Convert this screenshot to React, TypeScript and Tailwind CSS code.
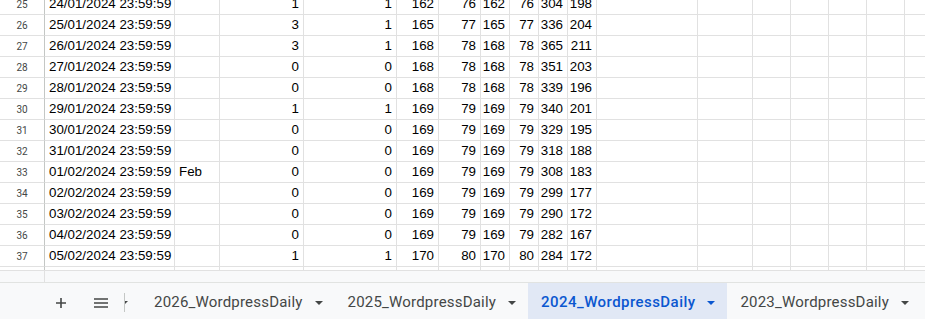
const colWidths = [
  "w-[130px]",
  "w-[45px]",
  "w-[84px]",
  "w-[93px]",
  "w-[42px]",
  "w-[42px]",
  "w-[29px]",
  "w-[29px]",
  "w-[29px]",
  "w-[29px]",
  "w-[101px]",
  "w-[55px]",
  "w-[38px]",
  "w-[38px]",
  "w-[38px]",
  "w-[38px]",
  "w-[100px]",
];

// [row, date, label, ...numbers]
const rows: [number, string, string, number[]][] = [
  [25, "24/01/2024 23:59:59", "", [1, 1, 162, 76, 162, 76, 304, 198]],
  [26, "25/01/2024 23:59:59", "", [3, 1, 165, 77, 165, 77, 336, 204]],
  [27, "26/01/2024 23:59:59", "", [3, 1, 168, 78, 168, 78, 365, 211]],
  [28, "27/01/2024 23:59:59", "", [0, 0, 168, 78, 168, 78, 351, 203]],
  [29, "28/01/2024 23:59:59", "", [0, 0, 168, 78, 168, 78, 339, 196]],
  [30, "29/01/2024 23:59:59", "", [1, 1, 169, 79, 169, 79, 340, 201]],
  [31, "30/01/2024 23:59:59", "", [0, 0, 169, 79, 169, 79, 329, 195]],
  [32, "31/01/2024 23:59:59", "", [0, 0, 169, 79, 169, 79, 318, 188]],
  [33, "01/02/2024 23:59:59", "Feb", [0, 0, 169, 79, 169, 79, 308, 183]],
  [34, "02/02/2024 23:59:59", "", [0, 0, 169, 79, 169, 79, 299, 177]],
  [35, "03/02/2024 23:59:59", "", [0, 0, 169, 79, 169, 79, 290, 172]],
  [36, "04/02/2024 23:59:59", "", [0, 0, 169, 79, 169, 79, 282, 167]],
  [37, "05/02/2024 23:59:59", "", [1, 1, 170, 80, 170, 80, 284, 172]],
];

const tabs = [
  { name: "2026_WordpressDaily", active: false },
  { name: "2025_WordpressDaily", active: false },
  { name: "2024_WordpressDaily", active: true },
  { name: "2023_WordpressDaily", active: false },
];

function DropArrow({ color, className = "" }: { color: string; className?: string }) {
  return (
    <svg width="8" height="4" viewBox="0 0 8 4" className={`shrink-0 ${className}`}>
      <path d="M0 0h8L4 4z" fill={color} />
    </svg>
  );
}

function Row({ num, date, label, values }: { num: number; date: string; label: string; values: number[] }) {
  const cells: string[] = [date, label, ...values.map(String)];
  return (
    <div className="flex h-[21px] shrink-0">
      <div className="w-[45px] shrink-0 border-r border-b border-r-[#c4c7c5] border-b-[#e1e1e1] flex items-center justify-center text-[10px] text-[#444746] font-['Roboto',sans-serif]">
        {num}
      </div>
      {colWidths.map((w, i) => {
        const text = cells[i] ?? "";
        const numeric = i >= 2;
        return (
          <div
            key={i}
            className={`${w} shrink-0 border-r border-b border-[#e1e1e1] leading-[20px] text-[13.33px] text-black whitespace-nowrap overflow-hidden ${
              numeric ? "text-right pr-[4px]" : "text-left pl-[4px]"
            }`}
          >
            {text}
          </div>
        );
      })}
    </div>
  );
}

export default function App() {
  return (
    <div className="w-[925px] h-[319px] overflow-hidden bg-white flex flex-col font-['Liberation_Sans',Arial,sans-serif]">
      {/* grid */}
      <div className="h-[282px] shrink-0 overflow-hidden flex flex-col">
        <div className="-mt-[6px] flex flex-col">
          {rows.map(([num, date, label, values]) => (
            <Row key={num} num={num} date={date} label={label} values={values} />
          ))}
        </div>
        <div className="flex h-[3px] shrink-0">
          <div className="w-[45px] shrink-0 border-r border-[#c4c7c5]" />
          {colWidths.map((w, i) => (
            <div key={i} className={`${w} shrink-0 border-r border-[#e1e1e1]`} />
          ))}
        </div>
        <div className="flex flex-1 border-t border-[#e1e1e1] bg-[#f8f9fa]">
          <div className="w-[45px] shrink-0 border-r border-[#e1e1e1]" />
        </div>
      </div>

      {/* sheet tabs */}
      <div className="h-[40px] shrink-0 flex items-center border-t border-[#e1e3e1] bg-[#f8f9fa] pl-[45px] font-['Roboto',sans-serif]">
        <button className="w-[32px] h-[32px] flex items-center justify-center">
          <svg width="10" height="10" viewBox="0 0 10 10">
            <path d="M5 0v10M0 5h10" stroke="#444746" strokeWidth="1.6" />
          </svg>
        </button>
        <button className="ml-[8px] w-[32px] h-[32px] flex items-center justify-center">
          <svg width="14" height="10" viewBox="0 0 14 10">
            <path d="M0 1h14M0 5h14M0 9h14" stroke="#444746" strokeWidth="1.6" />
          </svg>
        </button>
        <div className="ml-[7px] h-[19px] w-px bg-[#c4c7c5]" />
        <div className="flex h-full overflow-hidden">
          <div className="w-[16px] shrink-0 h-full flex items-center overflow-hidden">
            <DropArrow color="#444746" className="-ml-[5px]" />
          </div>
          {tabs.map((t) => (
            <div
              key={t.name}
              className={`flex h-full shrink-0 items-center gap-[12px] pl-[13px] pr-[12px] text-[15px] whitespace-nowrap ${
                t.active
                  ? "bg-[#e1e8f5] text-[#0b57d0] font-medium tracking-[0.45px]"
                  : "text-[#444746] tracking-[0.2px]"
              }`}
            >
              <span>{t.name}</span>
              <DropArrow color={t.active ? "#0b57d0" : "#444746"} />
            </div>
          ))}
        </div>
      </div>
    </div>
  );
}
